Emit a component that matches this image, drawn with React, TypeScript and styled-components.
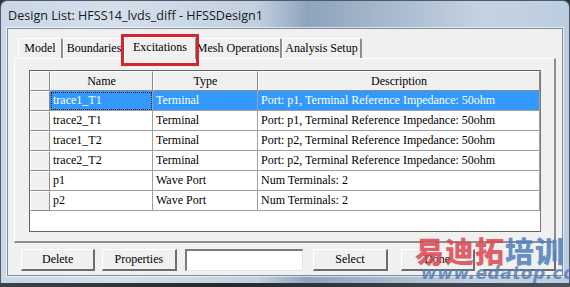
import React from 'react';
import styled, { createGlobalStyle } from 'styled-components';

const GlobalStyle = createGlobalStyle`
  html, body {
    margin: 0;
    padding: 0;
    background: #ffffff;
  }
  body {
    width: 570px;
    height: 287px;
    overflow: hidden;
  }
`;

const Page = styled.div`
  width: 570px;
  height: 287px;
  display: flex;
  flex-direction: column;
  background: #2e3338;
`;

const Window = styled.div`
  position: relative;
  width: 570px;
  height: 283px;
  box-sizing: border-box;
  border: 1px solid #4f5a66;
  border-bottom: none;
  border-radius: 7px 7px 0 0;
  background: linear-gradient(
    90deg,
    #c9d7e6 0%,
    #d4dfeb 20%,
    #c2d0df 45%,
    #8ea4bd 54%,
    #a3b6cb 66%,
    #c4d3e3 85%,
    #bccde0 100%
  );
  display: flex;
  flex-direction: column;
  padding: 0 6px 7px;
`;

const TitleBar = styled.div`
  height: 27px;
  display: flex;
  align-items: center;
  padding: 1px 0 0 1px;
  box-sizing: border-box;
  font-family: 'Open Sans', 'Noto Sans', sans-serif;
  font-size: 12.6px;
  color: #1a1a1a;
`;

const Client = styled.div`
  flex: 1;
  background: #f0f0f0;
  border: 1px solid #7f8d9c;
  box-shadow: 0 0 0 1px rgba(255, 255, 255, 0.6);
  display: flex;
  flex-direction: column;
  padding: 7px 6px 0;
  font-family: "Liberation Serif", "DejaVu Serif", serif;
  font-size: 12px;
  color: #000;
`;

const TabStrip = styled.div`
  display: flex;
  align-items: flex-end;
  height: 22px;
  padding-left: 4px;
  position: relative;
  z-index: 1;
`;

const Tab = styled.div<{ $width: number; $active?: boolean }>`
  position: relative;
  box-sizing: border-box;
  width: ${p => (p.$active ? p.$width + 4 : p.$width)}px;
  height: ${p => (p.$active ? 22 : 20)}px;
  margin: ${p => (p.$active ? '0 -2px -1px' : '0')};
  z-index: ${p => (p.$active ? 2 : 1)};
  display: flex;
  align-items: center;
  justify-content: center;
  background: #f0f0f0;
  border-top: 1px solid #ffffff;
  border-left: 1px solid #ffffff;
  border-right: 2px solid #8e8e8e;
  border-radius: 2px 2px 0 0;
  white-space: nowrap;
  padding-bottom: ${p => (p.$active ? 3 : 1)}px;
`;

const Highlight = styled.div`
  position: absolute;
  left: -4px;
  right: -4px;
  top: -4px;
  bottom: -7px;
  border: 3px solid #d3262f;
  pointer-events: none;
`;

const Panel = styled.div`
  height: 185px;
  box-sizing: border-box;
  border-top: 1px solid #ffffff;
  border-left: 1px solid #ffffff;
  border-right: 2px solid #8e8e8e;
  border-bottom: 2px solid #8e8e8e;
  padding: 11px 13px 9px 14px;
  display: flex;
`;

const Grid = styled.div`
  flex: 1;
  background: #ffffff;
  border: 1px solid #646464;
  border-right-color: #7a7a7a;
  display: grid;
  grid-template-columns: 20px 103px 105px 1fr;
  grid-auto-rows: 20px;
  align-content: start;
`;

const HeaderCell = styled.div`
  background: #f0f0f0;
  box-sizing: border-box;
  border-top: 1px solid #ffffff;
  border-left: 1px solid #ffffff;
  border-right: 1px solid #8a8a8a;
  border-bottom: 1px solid #8a8a8a;
  display: flex;
  align-items: center;
  justify-content: center;
`;

const RowHead = styled(HeaderCell)``;

const Cell = styled.div<{ $selected?: boolean; $focus?: boolean }>`
  box-sizing: border-box;
  border-right: 1px solid #a0a0a0;
  border-bottom: 1px solid #a0a0a0;
  background: ${p => (p.$selected ? '#3399ff' : '#ffffff')};
  color: ${p => (p.$selected ? '#ffffff' : '#000000')};
  display: flex;
  align-items: center;
  padding-left: 3px;
  white-space: nowrap;
  overflow: hidden;
  outline: ${p => (p.$focus ? '1px dotted #1a1a1a' : 'none')};
  outline-offset: -2px;
`;

const ButtonBar = styled.div`
  display: flex;
  align-items: center;
  padding: 6px 0 0 7px;
`;

const Button = styled.div<{ $ml?: number }>`
  width: 75px;
  height: 22px;
  box-sizing: border-box;
  margin-left: ${p => p.$ml ?? 0}px;
  background: #f0f0f0;
  border-top: 1px solid #ffffff;
  border-left: 1px solid #ffffff;
  border-right: 2px solid #6d6d6d;
  border-bottom: 2px solid #6d6d6d;
  display: flex;
  align-items: center;
  justify-content: center;
`;

const TextBox = styled.div<{ $ml?: number }>`
  width: 120px;
  height: 22px;
  box-sizing: border-box;
  margin-left: ${p => p.$ml ?? 0}px;
  background: #ffffff;
  border-top: 2px solid #7a7a7a;
  border-left: 2px solid #7a7a7a;
  border-right: 1px solid #e4e4e4;
  border-bottom: 1px solid #e4e4e4;
`;

const Desktop = styled.div`
  height: 4px;
  background: linear-gradient(90deg, #3b4148, #262a2e 40%, #4a525a);
`;

const Watermark = styled.div`
  position: absolute;
  left: 414px;
  top: 233px;
  display: flex;
  flex-direction: column;
  align-items: flex-start;
  opacity: 0.85;
  pointer-events: none;
`;

const MarkLine = styled.div`
  display: flex;
  font-family: 'Noto Sans CJK SC', sans-serif;
  font-weight: 900;
  font-size: 29px;
  line-height: 32px;
  letter-spacing: 1px;
`;

const MarkPart = styled.span<{ $color: string }>`
  color: ${p => p.$color};
`;

const MarkUrl = styled.div`
  margin: -3px 0 0 6px;
  font-family: 'DejaVu Sans', sans-serif;
  font-weight: bold;
  font-style: italic;
  font-size: 17px;
  line-height: 20px;
  color: #5a7fb6;
  letter-spacing: 0.5px;
`;

type Row = { name: string; type: string; desc: string };

const rows: Row[] = [
  { name: 'trace1_T1', type: 'Terminal', desc: 'Port: p1, Terminal Reference Impedance: 50ohm' },
  { name: 'trace2_T1', type: 'Terminal', desc: 'Port: p1, Terminal Reference Impedance: 50ohm' },
  { name: 'trace1_T2', type: 'Terminal', desc: 'Port: p2, Terminal Reference Impedance: 50ohm' },
  { name: 'trace2_T2', type: 'Terminal', desc: 'Port: p2, Terminal Reference Impedance: 50ohm' },
  { name: 'p1', type: 'Wave Port', desc: 'Num Terminals: 2' },
  { name: 'p2', type: 'Wave Port', desc: 'Num Terminals: 2' },
];

const tabs = [
  { label: 'Model', width: 45 },
  { label: 'Boundaries', width: 63 },
  { label: 'Excitations', width: 69, active: true },
  { label: 'Mesh Operations', width: 87 },
  { label: 'Analysis Setup', width: 80 },
];

const App = () => {
  return (
    <Page>
      <GlobalStyle />
      <Window>
        <TitleBar>Design List: HFSS14_lvds_diff - HFSSDesign1</TitleBar>
        <Client>
          <TabStrip>
            {tabs.map(tab => (
              <Tab key={tab.label} $width={tab.width} $active={tab.active}>
                {tab.label}
                {tab.active && <Highlight />}
              </Tab>
            ))}
          </TabStrip>
          <Panel>
            <Grid>
              <HeaderCell />
              <HeaderCell>Name</HeaderCell>
              <HeaderCell>Type</HeaderCell>
              <HeaderCell>Description</HeaderCell>
              {rows.map((row, i) => (
                <React.Fragment key={row.name}>
                  <RowHead />
                  <Cell $selected={i === 0} $focus={i === 0}>
                    {row.name}
                  </Cell>
                  <Cell $selected={i === 0}>{row.type}</Cell>
                  <Cell $selected={i === 0}>{row.desc}</Cell>
                </React.Fragment>
              ))}
            </Grid>
          </Panel>
          <ButtonBar>
            <Button>Delete</Button>
            <Button $ml={7}>Properties</Button>
            <TextBox $ml={8} />
            <Button $ml={10}>Select</Button>
            <Button $ml={13}>Done</Button>
            <Button $ml={7} />
          </ButtonBar>
        </Client>
        <Watermark>
          <MarkLine>
            <MarkPart $color="#dc4650">易迪拓</MarkPart>
            <MarkPart $color="#4f7fbf">培训</MarkPart>
          </MarkLine>
          <MarkUrl>www.edatop.com</MarkUrl>
        </Watermark>
      </Window>
      <Desktop />
    </Page>
  );
};

export default App;
